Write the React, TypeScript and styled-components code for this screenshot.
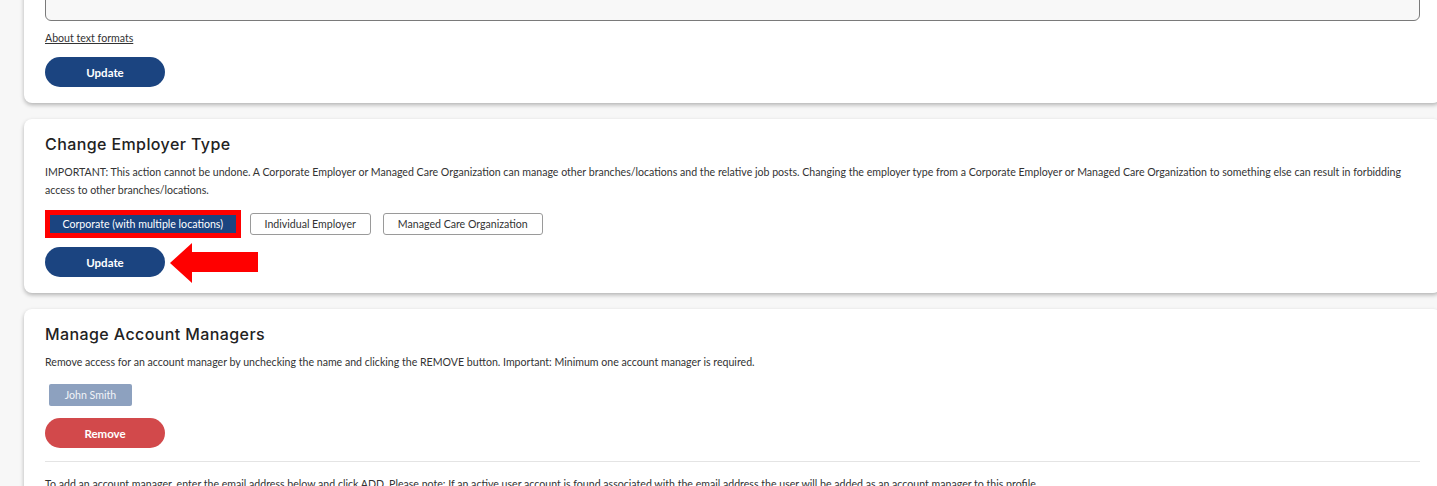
import styled, { createGlobalStyle } from "styled-components";

const GlobalStyle = createGlobalStyle`
  html, body {
    margin: 0;
    padding: 0;
    background: #f7f7f7;
    overflow: hidden;
  }
  body {
    font-family: 'Lato', 'Liberation Sans', sans-serif;
    color: #333;
  }
`;

const employerTypes = [
  { label: "Corporate (with multiple locations)", selected: true },
  { label: "Individual Employer", selected: false },
  { label: "Managed Care Organization", selected: false },
];

const App = () => {
  return (
    <>
      <GlobalStyle />
      <Page>
        <Card>
          <TextArea />
          <FormatLink href="#">About text formats</FormatLink>
          <PillButton>Update</PillButton>
        </Card>

        <Card>
          <Heading>Change Employer Type</Heading>
          <Para>
            IMPORTANT: This action cannot be undone. A Corporate Employer or Managed Care Organization can manage other
            branches/locations and the relative job posts. Changing the employer type from a Corporate Employer or Managed
            Care Organization to something else can result in forbidding access to other branches/locations.
          </Para>
          <TypeRow>
            {employerTypes.map((item, index) => (
              <TypeButton key={index} selected={item.selected}>
                {item.label}
              </TypeButton>
            ))}
          </TypeRow>
          <ActionRow>
            <PillButton>Update</PillButton>
            {/* annotation arrow pointing at the button */}
            <Arrow width="88" height="40" viewBox="0 0 88 40">
              <polygon points="0,20 22,0 22,9 88,9 88,29 22,29 22,40" fill="#ff0000" />
            </Arrow>
          </ActionRow>
        </Card>

        <Card>
          <Heading>Manage Account Managers</Heading>
          <Para>
            Remove access for an account manager by unchecking the name and clicking the REMOVE button. Important: Minimum
            one account manager is required.
          </Para>
          <Chip>John Smith</Chip>
          <PillButton danger>Remove</PillButton>
          <Divider />
          <Para spaced>
            To add an account manager, enter the email address below and click ADD. Please note: If an active user account is
            found associated with the email address the user will be added as an account manager to this profile.
          </Para>
        </Card>
      </Page>
    </>
  );
};

const Page = styled.div`
  display: flex;
  flex-direction: column;
  gap: 16px;
  padding-left: 24px;
  margin-top: -60px;
`;

const Card = styled.div`
  width: 1417px;
  box-sizing: border-box;
  background: #fff;
  border-radius: 8px;
  box-shadow: 0 2px 4px rgba(0, 0, 0, 0.28);
  padding: 15px 21px 16px 21px;
  display: flex;
  flex-direction: column;
  align-items: flex-start;
`;

const TextArea = styled.div`
  width: 100%;
  height: 66px;
  box-sizing: border-box;
  background: #f8f8f8;
  border: 1px solid #7a7a7a;
  border-radius: 6px;
`;

const FormatLink = styled.a`
  margin-top: 10px;
  font-size: 10.6px;
  line-height: 14px;
  color: #333;
  text-decoration: underline;
`;

const PillButton = styled.button<{ danger?: boolean }>`
  width: 120px;
  height: 30px;
  margin-top: 12px;
  border: none;
  border-radius: 15px;
  background: ${p => (p.danger ? "#d2494b" : "#1b4480")};
  color: #fff;
  font-family: 'Lato', 'Liberation Sans', sans-serif;
  font-weight: 700;
  font-size: 11.5px;
  cursor: pointer;
`;

const Heading = styled.h2`
  margin: 0;
  font-family: 'Inter', 'Liberation Sans', sans-serif;
  font-weight: 500;
  font-size: 16px;
  line-height: 20px;
  letter-spacing: 0.4px;
  color: #222;
`;

const Para = styled.p<{ spaced?: boolean }>`
  margin: ${p => (p.spaced ? "13px" : "9px")} 0 0 0;
  font-size: 10.6px;
  line-height: 18px;
  color: #333;
`;

const TypeRow = styled.div`
  display: flex;
  align-items: center;
  gap: 12px;
  margin-top: 14px;
  margin-left: 3px;
`;

const TypeButton = styled.button<{ selected?: boolean }>`
  height: 22px;
  padding: 0 ${p => (p.selected ? "12.5px" : "14px")};
  box-sizing: border-box;
  white-space: nowrap;
  font-family: 'Lato', 'Liberation Sans', sans-serif;
  font-size: 10.6px;
  border-radius: ${p => (p.selected ? "0" : "3px")};
  border: ${p => (p.selected ? "2px solid #ff0000" : "1px solid #9a9a9a")};
  outline: ${p => (p.selected ? "3px solid #ff0000" : "none")};
  background: ${p => (p.selected ? "#1b4480" : "#fff")};
  color: ${p => (p.selected ? "#fff" : "#333")};
`;

const ActionRow = styled.div`
  position: relative;
  display: flex;
  align-items: center;
`;

const Arrow = styled.svg`
  position: absolute;
  left: 125px;
  top: 8px;
  display: block;
`;

const Chip = styled.div`
  margin-top: 13px;
  margin-left: 4px;
  width: 83px;
  height: 22px;
  display: flex;
  align-items: center;
  justify-content: center;
  background: #8da1bf;
  color: #f2f4f8;
  font-size: 10.6px;
  border-radius: 2px;
`;

const Divider = styled.hr`
  width: 100%;
  margin: 13px 0 0 0;
  border: none;
  border-top: 1px solid #e4e4e4;
`;

export default App;
